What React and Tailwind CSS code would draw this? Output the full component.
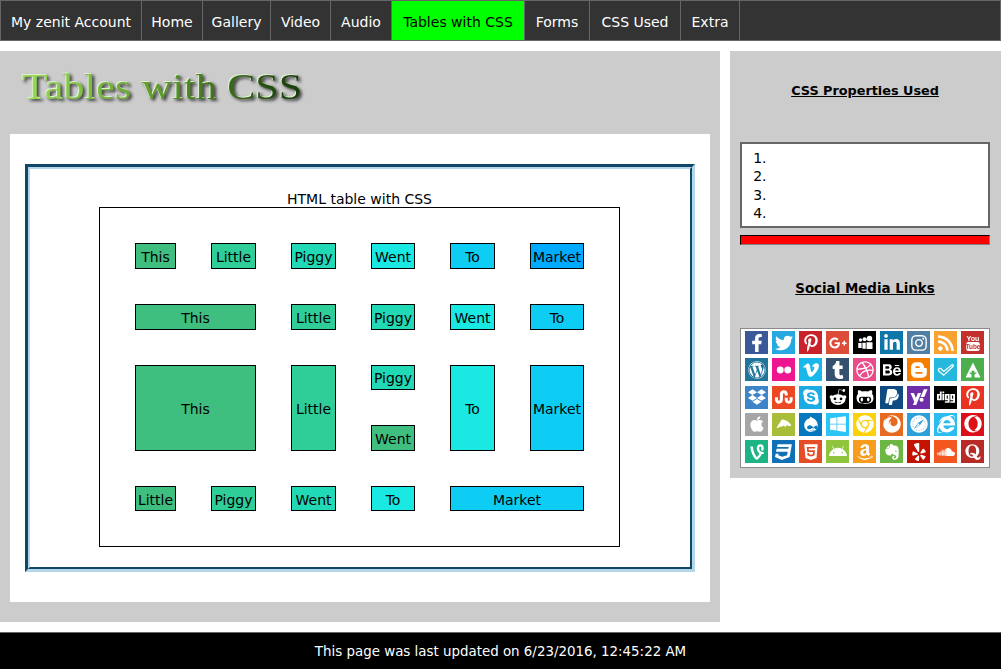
import {
  FaFacebookF, FaTwitter, FaPinterestP, FaGooglePlusG, FaLinkedinIn, FaInstagram, FaRss,
  FaWordpress, FaVimeoV, FaTumblr, FaDribbble, FaBehance, FaBloggerB, FaDropbox,
  FaStumbleupon, FaSkype, FaRedditAlien, FaGithubAlt, FaPaypal, FaYahoo, FaDigg, FaApple,
  FaDrupal, FaWindows, FaChrome, FaFirefox, FaSafari, FaInternetExplorer, FaOpera, FaVine,
  FaCss3, FaHtml5, FaAndroid, FaAmazon, FaEvernote, FaYelp, FaSoundcloud, FaQuora,
} from "react-icons/fa";

const font = "font-['DejaVu_Sans','Liberation_Sans',sans-serif]";

const navItems = [
  ["My zenit Account", "w-[141px]"],
  ["Home", "w-[61px]"],
  ["Gallery", "w-[68px]"],
  ["Video", "w-[60px]"],
  ["Audio", "w-[61px]"],
  ["Tables with CSS", "w-[133px]"],
  ["Forms", "w-[65px]"],
  ["CSS Used", "w-[91px]"],
  ["Extra", "w-[59px]"],
];

// column colours run from green to blue
const c1 = "bg-[#3fbf7f]";
const c2 = "bg-[#2fce99]";
const c3 = "bg-[#22d9b5]";
const c4 = "bg-[#1ae8e3]";
const c5 = "bg-[#0dcdf5]";
const c6 = "bg-[#00aaff]";

const Cell = ({ color, pad = "pt-[1px]", children, ...rest }) => (
  <td className={`${color} ${pad} border border-black text-center text-[14px] leading-[16px] text-black`} {...rest}>
    {children}
  </td>
);

const Flickr = ({ className }) => (
  <svg viewBox="0 0 24 24" className={className} fill="currentColor">
    <circle cx="7" cy="12" r="4.6" />
    <circle cx="17" cy="12" r="4.6" />
  </svg>
);

const Myspace = ({ className }) => (
  <svg viewBox="0 0 24 24" className={className} fill="currentColor">
    <circle cx="18" cy="6" r="3.6" />
    <circle cx="11.5" cy="7" r="2.8" />
    <circle cx="6" cy="8" r="2.2" />
    <path d="M14 11h8v9h-8zM8.500 11.500h4.500v8H8.500zM3 12h4.500v6.500H3z" />
  </svg>
);

const Check = ({ className }) => (
  <svg viewBox="0 0 24 24" className={className} fill="none" stroke="currentColor" strokeWidth="1.6">
    <path d="M2 11c1.500-1.500 3-1.500 4 0l3 3L20 5c1.500-.5 2.500 1 1.500 2L9 19 3 14c-1-1-1.500-2-1-3z" />
  </svg>
);

const Forrst = ({ className }) => (
  <svg viewBox="0 0 24 24" className={className} fill="currentColor">
    <path d="M12 2 22 22h-8v-4l3-2-1-1-2 1v-3h-4v3l-2-1-1 1 3 2v4H2z" />
  </svg>
);

const Slice = ({ className }) => (
  <svg viewBox="0 0 24 24" className={className} fill="currentColor">
    <path d="M2 17 9 6c5 0 10 3 13 8l-4 1-2-2-2 3-3-2-2 2-2-1-2 2z" />
  </svg>
);

// old style logo: the word on top, the tube below
const YouTube = ({ className }) => (
  <svg viewBox="0 0 24 24" className={className}>
    <text x="12" y="9" textAnchor="middle" fontSize="9.500" fontWeight="700" fill="#fff" fontFamily="Liberation Sans, sans-serif">You</text>
    <rect x="3" y="10.500" width="18" height="12" rx="3" fill="#fff" />
    <text x="12" y="20" textAnchor="middle" fontSize="8.500" fontWeight="700" fill="#c4302b" fontFamily="Liberation Sans, sans-serif">Tube</text>
  </svg>
);

const socials = [
  [FaFacebookF, "bg-[#3b5998]"], [FaTwitter, "bg-[#26a9e0]"], [FaPinterestP, "bg-[#c8232c]"], [FaGooglePlusG, "bg-[#dd4b39]"], [Myspace, "bg-black"], [FaLinkedinIn, "bg-[#0e76a8]"], [FaInstagram, "bg-[#517fa4]"], [FaRss, "bg-[#f9a131]"], [YouTube, "bg-[#c4302b]"],
  [FaWordpress, "bg-[#21759b]"], [Flickr, "bg-[#ed1590]"], [FaVimeoV, "bg-[#1ab7ea]"], [FaTumblr, "bg-[#34526f]"], [FaDribbble, "bg-[#ea4c89]"], [FaBehance, "bg-black"], [FaBloggerB, "bg-[#f57d00]"], [Check, "bg-[#25b8dc]"], [Forrst, "bg-[#4cae4c]"],
  [FaDropbox, "bg-[#3d85c6]"], [FaStumbleupon, "bg-[#eb4924]"], [FaSkype, "bg-[#1aace3]"], [FaRedditAlien, "bg-black"], [FaGithubAlt, "bg-black"], [FaPaypal, "bg-[#0f4a80]"], [FaYahoo, "bg-[#6f2da8]"], [FaDigg, "bg-black"], [FaPinterestP, "bg-[#ea3323]"],
  [FaApple, "bg-[#a6a6a6]"], [Slice, "bg-[#a9bd38]"], [FaDrupal, "bg-[#0678be]"], [FaWindows, "bg-[#2cc4f4]"], [FaChrome, "bg-[#fbd20c]"], [FaFirefox, "bg-[#e66a1f]"], [FaSafari, "bg-[#2d9fd9]"], [FaInternetExplorer, "bg-[#2cbcf0]"], [FaOpera, "bg-[#dc1018]"],
  [FaVine, "bg-[#1cb485]"], [FaCss3, "bg-[#0f70b7]"], [FaHtml5, "bg-[#e44d26]"], [FaAndroid, "bg-[#8fc43c]"], [FaAmazon, "bg-[#f79c1c]"], [FaEvernote, "bg-[#6cb644]"], [FaYelp, "bg-[#c41200]"], [FaSoundcloud, "bg-[#f4561f]"], [FaQuora, "bg-[#b92b27]"],
];

export default function App() {
  return (
    <div className={`${font} w-[1001px] bg-white text-black`}>
      {/* Nav */}
      <ul className="flex h-[41px] border border-[#666] bg-[#333]">
        {navItems.map(([item, width]) => (
          <li
            key={item}
            className={`${width} flex items-center justify-center border-r border-[#666] pt-[3px] text-[14px] ${
              item === "Tables with CSS" ? "bg-[#00ff00] text-black" : "text-white"
            }`}
          >
            {item}
          </li>
        ))}
      </ul>

      <div className="mt-[10px] flex items-start">
        {/* Main */}
        <main className="w-[720px] bg-[#cccccc] pb-[20px]">
          <div className="h-[83px] pl-[22px] pt-[14px]">
            <h1 className="inline-block origin-left scale-x-[1.17] bg-gradient-to-r from-[#9ade55] via-[#5b9a2c] to-[#173a0c] bg-clip-text font-['Liberation_Serif',serif] text-[36px] leading-[44px] text-transparent [filter:drop-shadow(-1px_-1px_0_#e2f0d4)_drop-shadow(2px_2px_1.500px_#444)]">
              Tables with CSS
            </h1>
          </div>

          <div className="mx-[10px] bg-white px-[15px] py-[30px]">
            {/* Groove frame */}
            <div className="h-[408px] border-[3px] border-t-[#0f4866] border-l-[#0f4866] border-r-[#b5d5e8] border-b-[#b5d5e8]">
              <div className="h-full border-2 border-t-[#b5d5e8] border-l-[#b5d5e8] border-r-[#0f4866] border-b-[#0f4866] pt-[21px]">
                <table className="ml-[69px] w-[521px] table-fixed border-separate border-spacing-[35px] border border-black">
                  <caption className="h-[17px] pt-[1px] text-[14px] leading-[17px]">HTML table with CSS</caption>
                  <colgroup>
                    <col className="w-[41px]" />
                    <col className="w-[45px]" />
                    <col className="w-[45px]" />
                    <col className="w-[44px]" />
                    <col className="w-[45px]" />
                    <col className="w-[54px]" />
                  </colgroup>
                  <tbody>
                    <tr className="h-[26px]">
                      <Cell color={c1}>This</Cell>
                      <Cell color={c2}>Little</Cell>
                      <Cell color={c3}>Piggy</Cell>
                      <Cell color={c4}>Went</Cell>
                      <Cell color={c5}>To</Cell>
                      <Cell color={c6}>Market</Cell>
                    </tr>
                    <tr className="h-[26px]">
                      <Cell color={c1} colSpan={2}>This</Cell>
                      <Cell color={c2}>Little</Cell>
                      <Cell color={c3}>Piggy</Cell>
                      <Cell color={c4}>Went</Cell>
                      <Cell color={c5}>To</Cell>
                    </tr>
                    <tr className="h-[25px]">
                      <Cell color={c1} colSpan={2} rowSpan={2}>This</Cell>
                      <Cell color={c2} rowSpan={2}>Little</Cell>
                      <Cell color={c3}>Piggy</Cell>
                      <Cell color={c4} rowSpan={2}>To</Cell>
                      <Cell color={c5} rowSpan={2}>Market</Cell>
                    </tr>
                    <tr className="h-[26px]">
                      <Cell color={c1}>Went</Cell>
                    </tr>
                    <tr className="h-[25px]">
                      <Cell color={c1} pad="pt-[2px]">Little</Cell>
                      <Cell color={c2} pad="pt-[2px]">Piggy</Cell>
                      <Cell color={c3} pad="pt-[2px]">Went</Cell>
                      <Cell color={c4} pad="pt-[2px]">To</Cell>
                      <Cell color={c5} pad="pt-[2px]" colSpan={2}>Market</Cell>
                    </tr>
                  </tbody>
                </table>
              </div>
            </div>
          </div>
        </main>

        {/* Sidebar */}
        <aside className="ml-[10px] h-[427px] w-[271px] bg-[#cccccc] pl-[10px] pr-[11px]">
          <h2 className="mt-[31px] h-[17px] text-center text-[12.800px] font-bold leading-[17px] underline">CSS Properties Used</h2>
          <ol className="mt-[43px] h-[86px] list-decimal border-2 border-[#666] bg-white pl-[29px] pt-[5px] text-[14px] leading-[18.400px]">
            <li />
            <li />
            <li />
            <li />
          </ol>
          <div className="mt-[7px] h-[10px] border border-t-black border-l-black border-r-[#808080] border-b-[#808080] bg-[#ff0000]" />
          <h2 className="mt-[35px] h-[18px] text-center text-[13.400px] font-bold leading-[18px] underline">Social Media Links</h2>
          <div className="mt-[30px] h-[140px] border border-[#8a8a8a] bg-white pl-[4px] pt-[2px]">
            <div className="grid grid-cols-[repeat(9,23px)] gap-x-[4px] gap-y-[4.300px] blur-[0.3px]">
              {socials.map(([Icon, bg], i) => (
                <div key={i} className={`${bg} flex h-[23px] w-[23px] items-center justify-center text-white`}>
                  <Icon className="h-[18px] w-[18px]" />
                </div>
              ))}
            </div>
          </div>
        </aside>
      </div>

      {/* Footer */}
      <footer className="mt-[10px] flex h-[37px] items-center justify-center border-t border-[#666] bg-black pt-[3px] text-[13.400px] text-white">
        This page was last updated on 6/23/2016, 12:45:22 AM
      </footer>
    </div>
  );
}
